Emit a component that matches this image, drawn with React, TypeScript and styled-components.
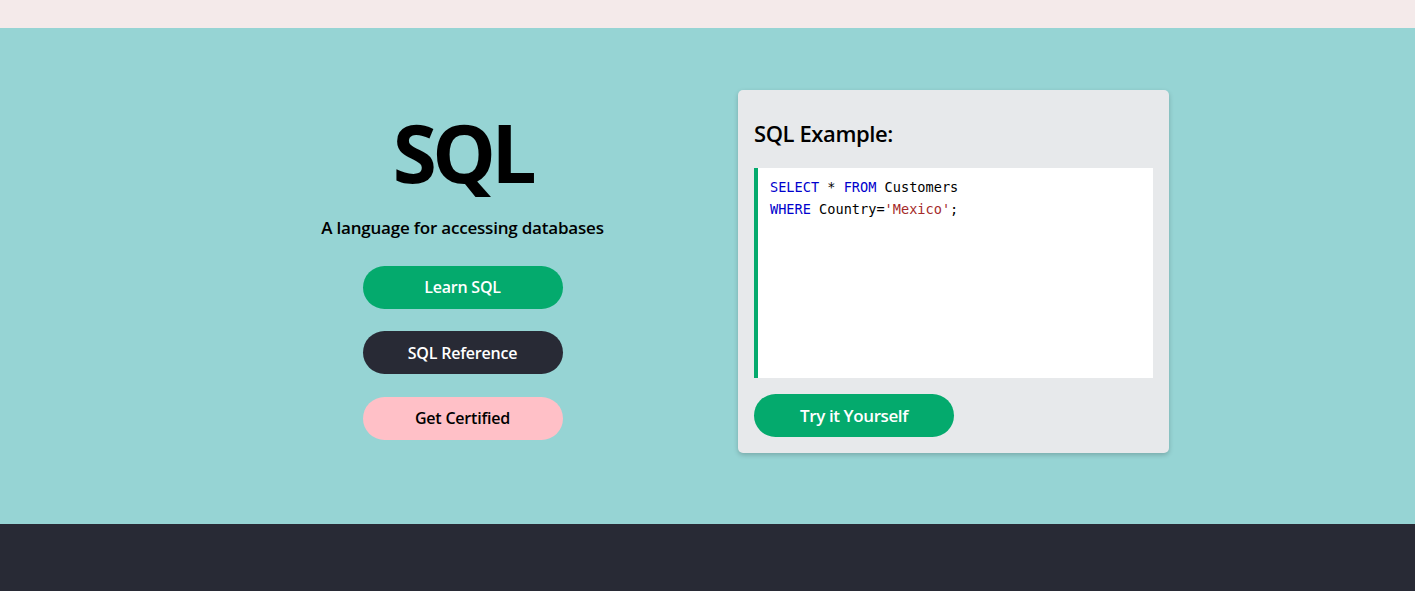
import React from "react";
import styled, { createGlobalStyle } from "styled-components";

const Global = createGlobalStyle`
  html, body { margin: 0; padding: 0; }
  body { font-family: "Open Sans", "Noto Sans", sans-serif; color: #000; background: #fff; }
  * { box-sizing: border-box; }
`;

const TopBar = styled.div`
  height: 28px;
  background: #f4eaea;
`;

const Hero = styled.section`
  background: #96d4d4;
  padding: 62px 0 71px;
`;

const Content = styled.div`
  max-width: 980px;
  margin: 0 auto;
  display: grid;
  grid-template-columns: 490px 490px;
  align-items: start;
`;

const LeftCol = styled.div`
  display: flex;
  flex-direction: column;
  align-items: center;
  text-align: center;
`;

const Title = styled.h1`
  margin: 22px 0 0;
  font-size: 80px;
  line-height: 80px;
  font-weight: 700;
  letter-spacing: -4.5px;
`;

const Subtitle = styled.p`
  margin: 23px 0 0;
  font-size: 17px;
  line-height: 25.5px;
  font-weight: 600;
  letter-spacing: -0.2px;
`;

const ButtonStack = styled.div`
  margin-top: 25px;
  display: flex;
  flex-direction: column;
  gap: 22.5px;
`;

const PillButton = styled.a<{ $bg: string; $fg: string }>`
  display: flex;
  align-items: center;
  justify-content: center;
  width: 200px;
  height: 43px;
  border-radius: 25px;
  background: ${(p) => p.$bg};
  color: ${(p) => p.$fg};
  font-size: 16px;
  font-weight: 600;
  letter-spacing: -0.2px;
  text-decoration: none;
  cursor: pointer;
`;

const Card = styled.div`
  margin: 0 28.5px 0 30.5px;
  background: #e7e9eb;
  border-radius: 5px;
  padding: 16px;
  box-shadow: 0 2px 5px rgba(0, 0, 0, 0.2);
`;

const CardTitle = styled.h3`
  margin: 11px 0 18px;
  font-size: 22px;
  line-height: 33px;
  font-weight: 600;
  letter-spacing: -0.4px;
`;

const CodeBox = styled.div`
  height: 210px;
  background: #fff;
  border-left: 4px solid #04aa6d;
  padding: 8px 12px;
  font-family: "DejaVu Sans Mono", "Liberation Mono", monospace;
  font-size: 13.6px;
  line-height: 22px;
  color: #000;
`;

const Keyword = styled.span`
  color: mediumblue;
`;

const Str = styled.span`
  color: #a52a2a;
`;

const TryButton = styled(PillButton)`
  margin-top: 16px;
  font-size: 17px;
  letter-spacing: -0.4px;
`;

const Footer = styled.footer`
  height: 67px;
  background: #282a35;
`;

export default function App() {
  return (
    <>
      <Global />
      <TopBar />
      <Hero>
        <Content>
          <LeftCol>
            <Title>SQL</Title>
            <Subtitle>A language for accessing databases</Subtitle>
            <ButtonStack>
              <PillButton $bg="#04aa6d" $fg="#fff">Learn SQL</PillButton>
              <PillButton $bg="#282a35" $fg="#fff">SQL Reference</PillButton>
              <PillButton $bg="#ffc0c7" $fg="#000">Get Certified</PillButton>
            </ButtonStack>
          </LeftCol>
          <Card>
            <CardTitle>SQL Example:</CardTitle>
            <CodeBox>
              <div>
                <Keyword>SELECT</Keyword> * <Keyword>FROM</Keyword> Customers
              </div>
              <div>
                <Keyword>WHERE</Keyword> Country=<Str>'Mexico'</Str>;
              </div>
            </CodeBox>
            <TryButton $bg="#04aa6d" $fg="#fff">Try it Yourself</TryButton>
          </Card>
        </Content>
      </Hero>
      <Footer />
    </>
  );
}
